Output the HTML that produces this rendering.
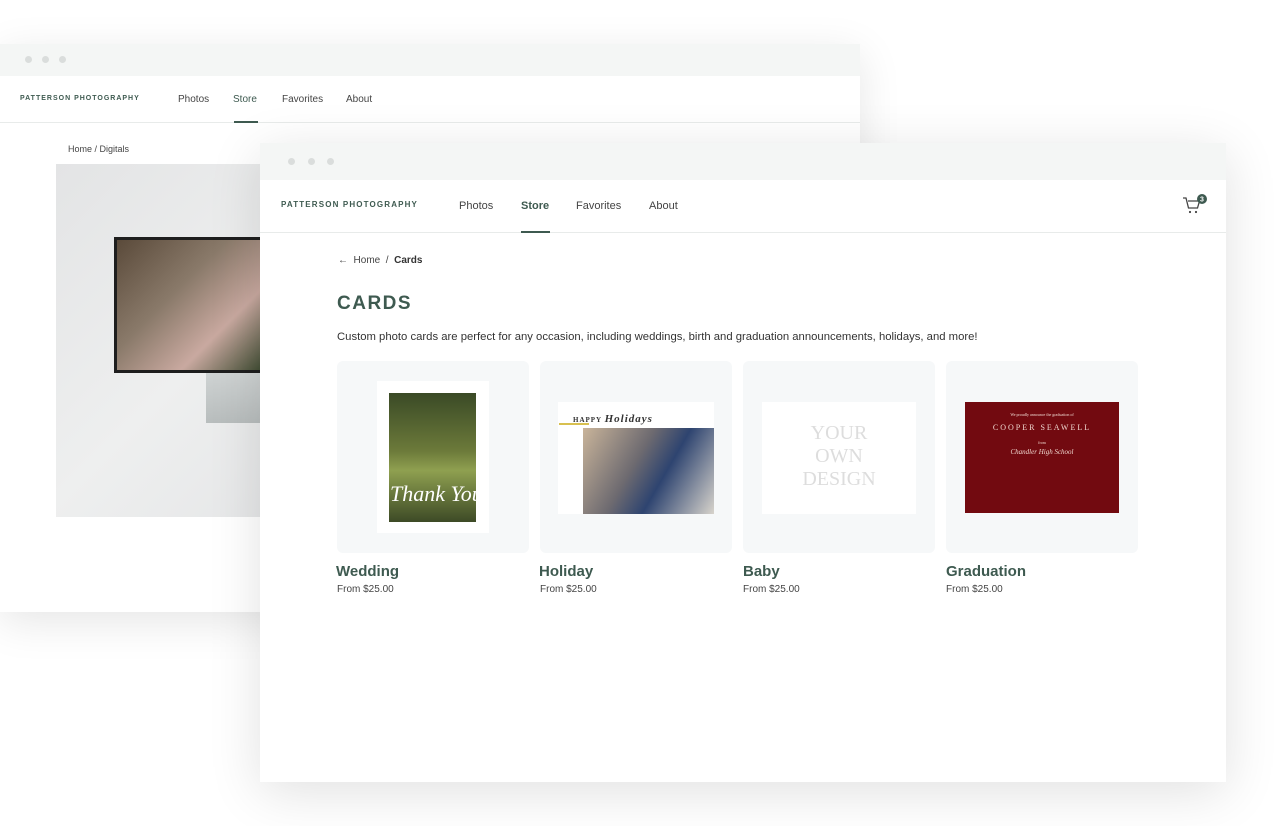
<!DOCTYPE html>
<html><head><style>
*{margin:0;padding:0;box-sizing:border-box}
body{width:1280px;height:826px;background:#fff;position:relative;overflow:hidden;font-family:"Liberation Sans",sans-serif;color:#333}
.win{position:absolute;background:#fff;box-shadow:0 10px 40px rgba(0,0,0,.10)}
.bar{position:absolute;left:0;right:0;top:0;background:#f4f6f5}
.dot{position:absolute;width:7px;height:7px;border-radius:50%;background:#dadddc}
.nav{position:absolute;left:0;right:0;border-bottom:1px solid #e8ebea}
.logo{position:absolute;font-weight:bold;color:#3e5a50}
.nl{position:absolute;color:#444}
.act{color:#3e5a50;font-weight:bold}
.ul{position:absolute;height:1.5px;background:#3e5a50}
.card{position:absolute;top:361px;width:192px;height:192px;background:#f6f8f9;border-radius:6px}
.ct{position:absolute;top:562px;font-size:15px;font-weight:bold;color:#3e5a50}
.cp{position:absolute;top:584px;font-size:10px;color:#444}
</style></head><body>
<div class="win" style="left:0;top:44px;width:860px;height:568px">
 <div class="bar" style="height:32px"></div>
 <div class="dot" style="left:25px;top:12px"></div><div class="dot" style="left:42px;top:12px"></div><div class="dot" style="left:59px;top:12px"></div>
 <div class="nav" style="top:32px;height:47px"></div>
 <div class="logo" style="left:20px;top:51px;font-size:7px;letter-spacing:1px">PATTERSON PHOTOGRAPHY</div>
 <div class="nl" style="left:178px;top:50px;font-size:10px">Photos</div>
 <div class="nl act" style="left:233px;top:50px;font-size:10px;font-weight:normal">Store</div>
 <div class="ul" style="left:234px;top:77px;width:24px"></div>
 <div class="nl" style="left:282px;top:50px;font-size:10px">Favorites</div>
 <div class="nl" style="left:346px;top:50px;font-size:10px">About</div>
 <div class="nl" style="left:68px;top:100px;font-size:9px">Home / Digitals</div>
 <div style="position:absolute;left:56px;top:120px;width:210px;height:353px;background:linear-gradient(135deg,#e3e4e5,#eeefef 60%,#e6e7e8)"></div>
 <div style="position:absolute;left:114px;top:193px;width:150px;height:136px;background:#1e1e1e"></div>
 <div style="position:absolute;left:117px;top:196px;width:147px;height:130px;background:linear-gradient(135deg,#5a4a3a,#8a7a6a 40%,#c9a9a0 70%,#3c4a30)"></div>
 <div style="position:absolute;left:206px;top:329px;width:54px;height:50px;background:linear-gradient(#cfd3d3,#b8bdbd)"></div>
</div>
<div class="win" style="left:260px;top:143px;width:966px;height:639px;box-shadow:0 10px 50px rgba(0,0,0,.12)">
 <div class="bar" style="height:37px"></div>
 <div class="dot" style="left:28px;top:15px"></div><div class="dot" style="left:48px;top:15px"></div><div class="dot" style="left:67px;top:15px"></div>
 <div class="nav" style="top:37px;height:53px"></div>
 <div class="logo" style="left:21px;top:57px;font-size:8px;letter-spacing:1.15px">PATTERSON PHOTOGRAPHY</div>
 <div class="nl" style="left:199px;top:57px;font-size:11px">Photos</div>
 <div class="nl act" style="left:261px;top:57px;font-size:11px">Store</div>
 <div class="ul" style="left:261px;top:88px;width:29px"></div>
 <div class="nl" style="left:316px;top:57px;font-size:11px">Favorites</div>
 <div class="nl" style="left:389px;top:57px;font-size:11px">About</div>
 <svg style="position:absolute;left:922px;top:50px" width="28" height="24" viewBox="0 0 28 24"><path d="M1 5h3l2.5 10h9l2-7H6" fill="none" stroke="#444" stroke-width="1.3"/><circle cx="8" cy="19" r="1.1" fill="#444"/><circle cx="14" cy="19" r="1.1" fill="#444"/><circle cx="20" cy="6" r="5" fill="#3e5a50"/><text x="20" y="8.5" font-size="7" fill="#fff" text-anchor="middle" font-family="Liberation Sans" font-weight="bold">3</text></svg>
 <div class="nl" style="left:78px;top:112px;font-size:10px">&#8592;&nbsp; Home &nbsp;/&nbsp; <b style="color:#333">Cards</b></div>
 <div style="position:absolute;left:77px;top:150px;font-size:19px;font-weight:bold;letter-spacing:1.5px;color:#3e5a50">CARDS</div>
 <div class="nl" style="left:77px;top:188px;font-size:11.3px;color:#333">Custom photo cards are perfect for any occasion, including weddings, birth and graduation announcements, holidays, and more!</div>
</div>
<div class="card" style="left:337px"><div style="position:absolute;left:40px;top:20px;width:112px;height:152px;background:#fff"></div><div style="position:absolute;left:52px;top:32px;width:87px;height:129px;background:linear-gradient(#3a4a26,#6c7a3a 45%,#8fa050 60%,#3d4a26)"></div><div style="position:absolute;left:53px;top:120px;font:italic 22px 'Liberation Serif',serif;color:#fff">Thank You</div></div>
<div class="card" style="left:540px"><div style="position:absolute;left:18px;top:41px;width:156px;height:112px;background:#fff"></div><div style="position:absolute;left:43px;top:67px;width:131px;height:86px;background:linear-gradient(120deg,#c9b49a,#6d6a70 40%,#2e4470 60%,#d8d4cc)"></div><div style="position:absolute;left:33px;top:52px;font:bold 7px 'Liberation Serif',serif;letter-spacing:1px">HAPPY <i style="font-size:11px">Holidays</i></div><div style="position:absolute;left:19px;top:62px;width:30px;height:2px;background:#d8c050"></div></div>
<div class="card" style="left:743px"><div style="position:absolute;left:19px;top:41px;width:154px;height:112px;background:#fff;text-align:center;padding-top:20px;font:20px/23px 'Liberation Serif',serif;color:#ddd">YOUR<br>OWN<br>DESIGN</div></div>
<div class="card" style="left:946px"><div style="position:absolute;left:19px;top:41px;width:154px;height:111px;background:#720a10;text-align:center;color:#f0d8d0;font-family:'Liberation Serif',serif"><div style="font-size:4px;margin-top:10px">We proudly announce the graduation of</div><div style="font-size:8px;letter-spacing:2px;margin-top:6px">COOPER SEAWELL</div><div style="font-size:4px;margin-top:8px">from</div><div style="font-size:7px;font-style:italic;margin-top:3px">Chandler High School</div></div></div>
<div class="ct" style="left:336px;top:563px">Wedding</div><div class="cp" style="left:337px">From $25.00</div>
<div class="ct" style="left:539px;top:563px">Holiday</div><div class="cp" style="left:540px">From $25.00</div>
<div class="ct" style="left:743px;top:563px">Baby</div><div class="cp" style="left:743px">From $25.00</div>
<div class="ct" style="left:946px;top:563px">Graduation</div><div class="cp" style="left:946px">From $25.00</div>
</body></html>
